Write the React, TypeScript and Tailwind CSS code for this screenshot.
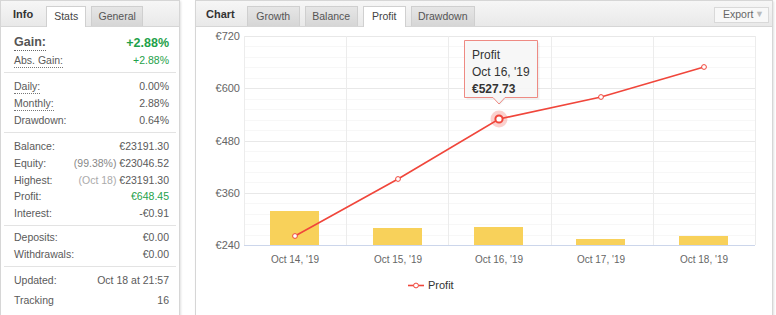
import React from "react"

const font = { fontFamily: '"Liberation Sans", Arial, sans-serif' }

type Row = { label: string; value: React.ReactNode; dotted?: boolean; green?: boolean }

const blockA: Row[] = [
  { label: "Daily:", value: "0.00%", dotted: true },
  { label: "Monthly:", value: "2.88%", dotted: true },
  { label: "Drawdown:", value: "0.64%" },
]

const blockB: Row[] = [
  { label: "Balance:", value: "€23191.30" },
  { label: "Equity:", value: <><span className="text-[#888]">(99.38%)</span> €23046.52</> },
  { label: "Highest:", value: <><span className="text-[#aaa]">(Oct 18)</span> €23191.30</> },
  { label: "Profit:", value: "€648.45", green: true },
  { label: "Interest:", value: "-€0.91" },
]

const blockC: Row[] = [
  { label: "Deposits:", value: "€0.00" },
  { label: "Withdrawals:", value: "€0.00" },
]

function StatRow({ row, h = "h-[16.6px]" }: { row: Row; h?: string }) {
  return (
    <div className={`flex items-center justify-between pl-[13px] pr-[10px] text-[10.5px] text-[#5a5a5a] ${h}`}>
      <span className={row.dotted ? "border-b border-dotted border-[#777] leading-[13px]" : ""}>{row.label}</span>
      <span className={row.green ? "text-[#1ea14a]" : ""}>{row.value}</span>
    </div>
  )
}

function Sep() {
  return <div className="mx-[3px] border-t border-[#e3e3e3]" />
}

function InfoPanel() {
  return (
    <div className="w-[180px] h-[330px] bg-white border border-[#d6d6d6] shadow-[1px_1px_2px_rgba(0,0,0,0.12)]">
      {/* Header with tabs */}
      <div className="h-[26px] flex items-end bg-gradient-to-b from-[#f6f6f6] to-[#e9e9e9] border-b border-[#d6d6d6]">
        <span className="self-center ml-[12px] mr-[13px] mt-[2px] text-[11px] font-bold text-[#333]">Info</span>
        <div className="h-[21px] w-[40px] -mb-px flex items-center justify-center bg-white border border-b-0 border-[#d0d0d0] text-[10.5px] text-[#444]">
          Stats
        </div>
        <div className="h-[20px] w-[52px] ml-[5px] flex items-center justify-center bg-gradient-to-b from-[#e6e6e6] to-[#d6d6d6] border border-b-0 border-[#cfcfcf] text-[10.5px] text-[#555]">
          General
        </div>
      </div>

      <div className="pt-[7px]">
        <div className="flex items-center justify-between pl-[13px] pr-[10px] h-[18px]">
          <span className="text-[12.5px] font-bold text-[#555] border-b border-dotted border-[#666] leading-[15px]">Gain:</span>
          <span className="text-[12.5px] font-bold text-[#1ea14a]">+2.88%</span>
        </div>
        <div className="flex items-center justify-between pl-[13px] pr-[10px] h-[17px] text-[10.5px]">
          <span className="text-[#5a5a5a] border-b border-dotted border-[#777] leading-[13px]">Abs. Gain:</span>
          <span className="text-[#1ea14a]">+2.88%</span>
        </div>
        <div className="h-[3px]" />
        <Sep />
        <div className="pt-[5px] pb-[3px]">
          {blockA.map((r) => <StatRow key={r.label} row={r} h="h-[17px]" />)}
        </div>
        <Sep />
        <div className="pt-[6px] pb-[3px]">
          {blockB.map((r) => <StatRow key={r.label} row={r} />)}
        </div>
        <Sep />
        <div className="pt-[4px] pb-[3px]">
          {blockC.map((r) => <StatRow key={r.label} row={r} />)}
        </div>
        <Sep />
        <div className="pt-[5px]">
          <StatRow row={{ label: "Updated:", value: "Oct 18 at 21:57" }} h="h-[18px]" />
          <StatRow row={{ label: "Tracking", value: "16" }} h="h-[22px]" />
        </div>
      </div>
    </div>
  )
}

const chartTabs = [
  { name: "Growth", w: "w-[53px]" },
  { name: "Balance", w: "w-[53px]" },
  { name: "Profit", w: "w-[43px]", active: true },
  { name: "Drawdown", w: "w-[64px]" },
]

const points = [
  { x: 295, y: 236, bar: 211, label: "Oct 14, '19" },
  { x: 398, y: 179, bar: 228, label: "Oct 15, '19" },
  { x: 499, y: 119, bar: 227, label: "Oct 16, '19" },
  { x: 601, y: 97, bar: 239, label: "Oct 17, '19" },
  { x: 704, y: 67, bar: 236, label: "Oct 18, '19" },
]

function ProfitChart() {
  const major = [
    { y: 36, t: "€720" },
    { y: 88.25, t: "€600" },
    { y: 140.5, t: "€480" },
    { y: 192.75, t: "€360" },
    { y: 245, t: "€240" },
  ]
  const minor: number[] = []
  for (let i = 0; i < 20; i++) if (i % 5 !== 0) minor.push(36 + i * 10.45)

  return (
    <svg width="576" height="300" viewBox="196 27 576 300" style={font}>
      {minor.map((y) => (
        <line key={y} x1="244" x2="755" y1={Math.round(y) + 0.5} y2={Math.round(y) + 0.5} stroke="#f7f7f7" />
      ))}
      {major.slice(0, 4).map((m) => (
        <line key={m.y} x1="244" x2="755" y1={Math.round(m.y) + 0.5} y2={Math.round(m.y) + 0.5} stroke="#e8e8e8" />
      ))}
      {[244, 346, 448, 551, 653, 755].map((x) => (
        <line key={x} x1={x + 0.5} x2={x + 0.5} y1="36" y2="245" stroke="#ececec" />
      ))}
      {major.map((m) => (
        <text key={m.t} x="240" y={m.y + 4} textAnchor="end" fontSize="11" fill="#666">{m.t}</text>
      ))}

      {points.map((p) => (
        <rect key={p.label} x={p.x - 25} y={p.bar} width="49" height={245 - p.bar} fill="#f8d15a" />
      ))}
      <line x1="244" x2="755" y1="245.5" y2="245.5" stroke="#ccd6eb" />
      {points.map((p) => (
        <text key={p.label} x={p.x} y="263" textAnchor="middle" fontSize="10" fill="#666">{p.label}</text>
      ))}

      <polyline points={points.map((p) => `${p.x},${p.y}`).join(" ")} fill="none" stroke="#f0463b" strokeWidth="1.6" />
      {points.map((p, i) =>
        i === 2 ? null : <circle key={p.label} cx={p.x} cy={p.y} r="2.4" fill="#fff" stroke="#f0463b" strokeWidth="1" />
      )}
      <circle cx="499" cy="119" r="8.5" fill="#f0463b" opacity="0.25" />
      <circle cx="499" cy="119" r="3.6" fill="#fff" stroke="#f0463b" strokeWidth="2" />

      {/* tooltip */}
      <path d="M466.5 42.5 H539.5 V99.5 H505 L500 105 L495 99.5 H466.5 Z" fill="rgba(0,0,0,0.06)" />
      <path d="M464.5 40.5 H537.5 V97.5 H505 L499 104 L493 97.5 H464.5 Z" fill="#f7f7f7" fillOpacity="0.92" stroke="#ee8a83" />
      <text x="472" y="59" fontSize="12" fill="#333">Profit</text>
      <text x="472" y="76" fontSize="12" fill="#333">Oct 16, '19</text>
      <text x="472" y="93" fontSize="12" fill="#333" fontWeight="bold">€527.73</text>

      {/* legend */}
      <line x1="408" x2="424" y1="285.5" y2="285.5" stroke="#f0463b" strokeWidth="1.6" />
      <circle cx="416" cy="285.5" r="2.4" fill="#fff" stroke="#f0463b" />
      <text x="428" y="289" fontSize="11" fill="#333">Profit</text>
    </svg>
  )
}

function ChartPanel() {
  return (
    <div className="w-[578px] h-[330px] bg-white border border-[#d6d6d6] shadow-[1px_1px_2px_rgba(0,0,0,0.12)]">
      <div className="h-[26px] flex items-end bg-gradient-to-b from-[#f6f6f6] to-[#e9e9e9] border-b border-[#d6d6d6]">
        <span className="self-center ml-[10px] mr-[12px] mt-[2px] text-[11px] font-bold text-[#333]">Chart</span>
        <div className="flex items-end gap-[5px]">
          {chartTabs.map((t) => (
            <div
              key={t.name}
              className={
                t.active
                  ? `h-[21px] ${t.w} -mb-px flex items-center justify-center bg-white border border-b-0 border-[#d0d0d0] text-[10.5px] text-[#444]`
                  : `h-[20px] ${t.w} flex items-center justify-center bg-gradient-to-b from-[#e6e6e6] to-[#d6d6d6] border border-b-0 border-[#cfcfcf] text-[10.5px] text-[#555]`
              }
            >
              {t.name}
            </div>
          ))}
        </div>
        <div className="ml-auto mr-[3px] self-start mt-[6px] h-[16px] w-[55px] flex items-center justify-between pl-[8px] pr-[4px] bg-[#f8f8f8] border border-[#d9d9d9] text-[10.5px] text-[#666]">
          Export
          <span className="text-[9px] text-[#bbb]">▼</span>
        </div>
      </div>
      <ProfitChart />
    </div>
  )
}

export default function App() {
  return (
    <div className="w-[776px] h-[315px] overflow-hidden bg-white flex items-start gap-[15px]" style={font}>
      <InfoPanel />
      <ChartPanel />
    </div>
  )
}
